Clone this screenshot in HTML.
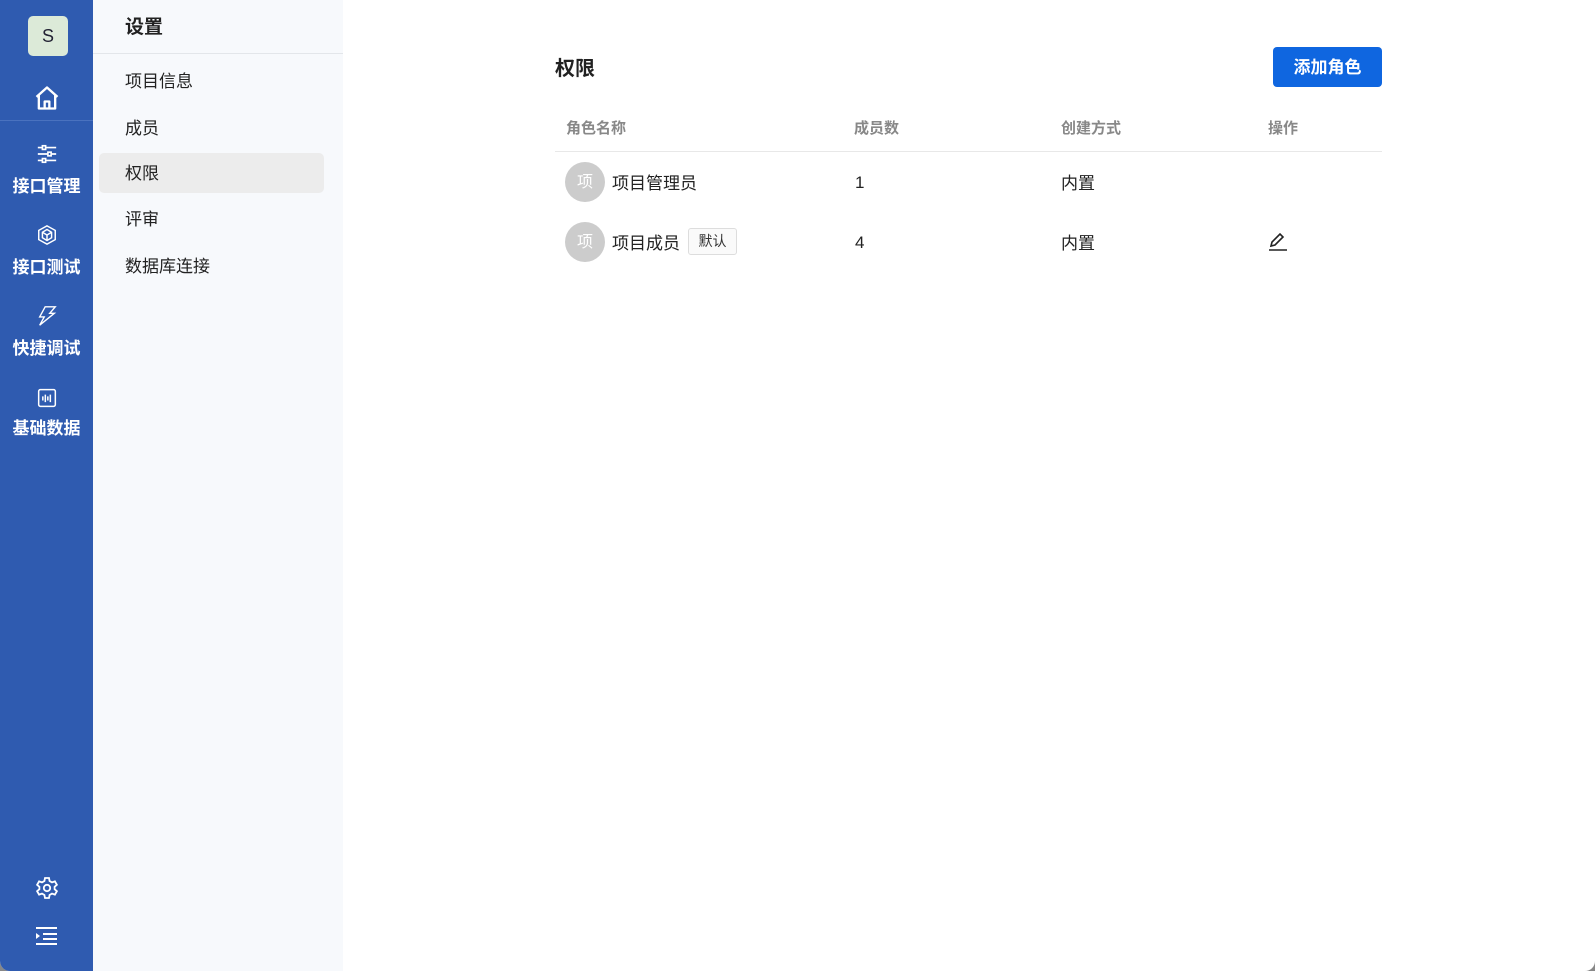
<!DOCTYPE html>
<html><head><meta charset="utf-8"><style>
*{margin:0;padding:0;box-sizing:border-box}
body{width:1595px;height:971px;overflow:hidden;background:#888;font-family:"Liberation Sans","Noto Sans CJK SC",sans-serif;color:#222}
.win{position:absolute;left:0;top:0;width:1595px;height:971px;background:#fff;border-radius:0 0 10px 10px;overflow:hidden}
.side{position:absolute;left:0;top:0;width:93px;height:971px;background:#2f5bb0;color:#fff}
.logo{position:absolute;left:28px;top:16px;width:40px;height:40px;background:#dcead8;border-radius:5px;color:#223;font-size:18px;text-align:center;line-height:40px}
.div{position:absolute;left:0;top:120px;width:93px;height:1px;background:#4a72bf}
.ic{position:absolute;left:0;width:93px;display:flex;justify-content:center}
.lbl{position:absolute;left:0;width:93px;text-align:center;font-size:17px;font-weight:bold;color:#fff}
.sub{position:absolute;left:93px;top:0;width:250px;height:971px;background:#f7f9fc}
.sub h2{position:absolute;left:32px;top:12px;font-size:19px;font-weight:bold;color:#222}
.sub .hl{position:absolute;left:0;top:53px;width:250px;height:1px;background:#e3e6ea}
.it{position:absolute;left:32px;font-size:17px;color:#222}
.act{position:absolute;left:6px;top:153px;width:225px;height:40px;background:#ececec;border-radius:5px}
.t{position:absolute;font-size:17px;color:#222}
.th{position:absolute;font-size:15px;color:#888;font-weight:bold;top:117px}
.av{position:absolute;left:565px;width:40px;height:40px;border-radius:50%;background:#ccc;color:#fff;font-size:16px;text-align:center;line-height:42px}
</style></head><body><div class="win">
<div class="side">
<div class="logo">S</div>
<div class="ic" style="top:84px"><svg width="28" height="28" viewBox="0 0 24 24" fill="none" stroke="#fff" stroke-width="2" stroke-linejoin="round"><path d="M3 11L12 3l9 8M5 9.5V21h14V9.5M10 21v-6h4v6"/></svg></div>
<div class="div"></div>
<div class="ic" style="top:143px"><svg width="22" height="22" viewBox="0 0 24 24" fill="none" stroke="#fff" stroke-width="1.8"><path d="M2 5h20M2 12h20M2 19h20"/><rect x="7" y="3" width="3.5" height="4" fill="#2f5bb0"/><rect x="13" y="10" width="3.5" height="4" fill="#2f5bb0"/><rect x="7" y="17" width="3.5" height="4" fill="#2f5bb0"/></svg></div>
<div class="lbl" style="top:172px">接口管理</div>
<div class="ic" style="top:224px"><svg width="22" height="22" viewBox="0 0 24 24" fill="none" stroke="#fff" stroke-width="1.6"><path d="M12 2l9 5v10l-9 5-9-5V7z"/><path d="M12 6l5 3v6l-5 3-5-3V9z"/><path d="M7 9l5 3 5-3M12 12v6"/></svg></div>
<div class="lbl" style="top:253px">接口测试</div>
<div class="ic" style="top:305px"><svg width="22" height="22" viewBox="0 0 24 24" fill="none" stroke="#fff" stroke-width="1.5"><path d="M10 2h11l-6 7h5L4 22l5-9H4z"/></svg></div>
<div class="lbl" style="top:334px">快捷调试</div>
<div class="ic" style="top:388px"><svg width="20" height="20" viewBox="0 0 24 24" fill="none" stroke="#fff" stroke-width="1.8"><rect x="2" y="2" width="20" height="20" rx="2"/><path d="M7 10v5M10 8v9M13 10v5M16 8v9"/></svg></div>
<div class="lbl" style="top:414px">基础数据</div>
<div class="ic" style="top:876px"><svg width="24" height="24" viewBox="0 0 24 24" fill="none" stroke="#fff" stroke-width="1.8"><circle cx="12" cy="12" r="3.2"/><path d="M10 2h4l.6 3 2.4 1.4 2.9-1 2 3.4-2.3 2v2.4l2.3 2-2 3.4-2.9-1L14.6 19l-.6 3h-4l-.6-3L7 17.6l-2.9 1-2-3.4 2.3-2v-2.4l-2.3-2 2-3.4 2.9 1L9.4 5z"/></svg></div>
<div class="ic" style="top:926px"><svg width="22" height="20" viewBox="0 0 22 20" fill="#fff"><rect x="0" y="1" width="21" height="2"/><rect x="7" y="7" width="14" height="2"/><rect x="7" y="12" width="14" height="2"/><rect x="0" y="17" width="21" height="2"/><path d="M0 7l4 3-4 3z"/></svg></div>
</div>
<div class="sub">
<h2>设置</h2><div class="hl"></div>
<div class="act"></div>
<div class="it" style="top:67px">项目信息</div>
<div class="it" style="top:114px">成员</div>
<div class="it" style="top:159px">权限</div>
<div class="it" style="top:205px">评审</div>
<div class="it" style="top:252px">数据库连接</div>
</div>
<div class="t" style="left:555px;top:52px;font-size:20px;font-weight:bold">权限</div>
<div style="position:absolute;left:1273px;top:47px;width:109px;height:40px;background:#0f66e0;border-radius:4px;color:#fff;font-weight:bold;font-size:17px;text-align:center;line-height:42px">添加角色</div>
<div class="th" style="left:566px">角色名称</div>
<div class="th" style="left:854px">成员数</div>
<div class="th" style="left:1061px">创建方式</div>
<div class="th" style="left:1268px">操作</div>
<div style="position:absolute;left:555px;top:151px;width:827px;height:1px;background:#e8e8e8"></div>
<div class="av" style="top:162px">项</div>
<div class="t" style="left:612px;top:169px">项目管理员</div>
<div class="t" style="left:855px;top:173px">1</div>
<div class="t" style="left:1061px;top:169px">内置</div>
<div class="av" style="top:222px">项</div>
<div class="t" style="left:612px;top:229px">项目成员</div>
<div style="position:absolute;left:688px;top:228px;width:49px;height:27px;border:1px solid #ddd;border-radius:3px;background:#fafafa;font-size:14px;text-align:center;line-height:25px;color:#333">默认</div>
<div class="t" style="left:855px;top:233px">4</div>
<div class="t" style="left:1061px;top:229px">内置</div>
<svg style="position:absolute;left:1268px;top:231px" width="20" height="20" viewBox="0 0 20 20" fill="none" stroke="#222" stroke-width="1.6"><path d="M3 15l1-4 8-8 3 3-8 8z"/><path d="M1 19h18"/></svg>
</div></body></html>
